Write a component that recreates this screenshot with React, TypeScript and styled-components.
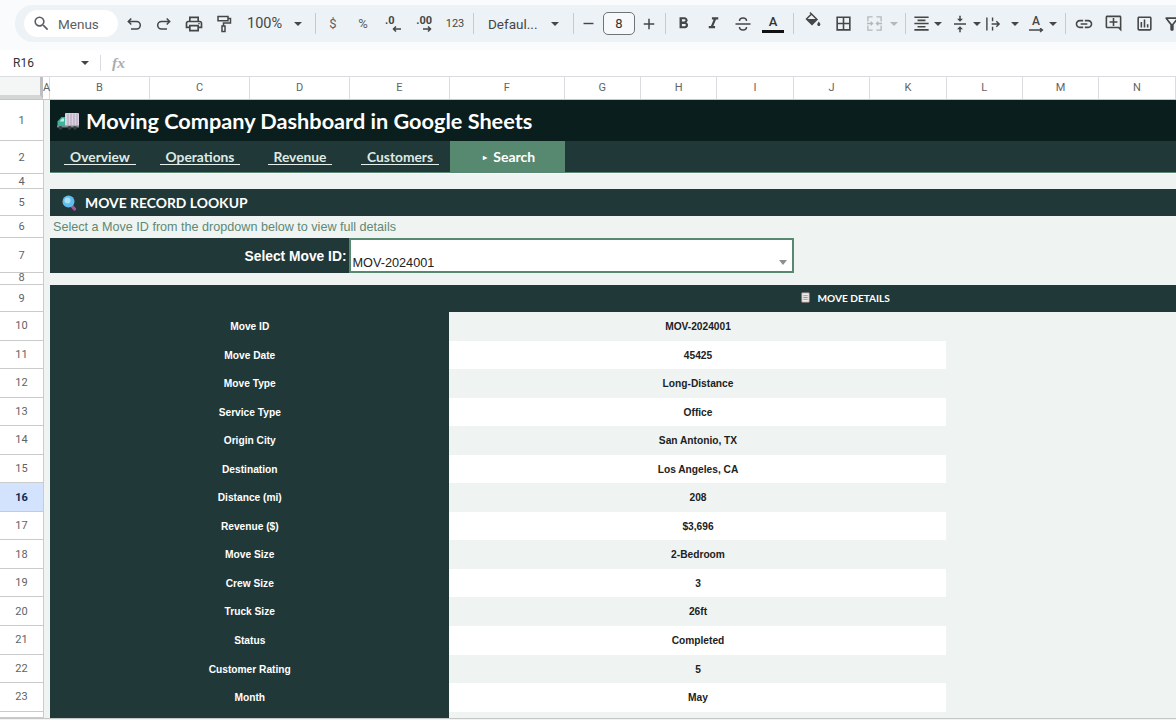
import React from 'react';
import styled, { createGlobalStyle } from 'styled-components';
import {
  MdOutlinePrint,
  MdSearch,
  MdAdd,
  MdRemove,
  MdFormatBold,
  MdFormatItalic,
  MdOutlineBorderAll,
  MdFormatAlignCenter,
  MdVerticalAlignCenter,
  MdLink,
  MdOutlineAddComment,
  MdOutlineInsertChart,
  MdOutlineFilterAlt,
} from 'react-icons/md';

const columns = [
  { name: 'A', width: 7 },
  { name: 'B', width: 100 },
  { name: 'C', width: 100 },
  { name: 'D', width: 100 },
  { name: 'E', width: 100 },
  { name: 'F', width: 114.5 },
  { name: 'G', width: 76.5 },
  { name: 'H', width: 76.4 },
  { name: 'I', width: 76.4 },
  { name: 'J', width: 76.4 },
  { name: 'K', width: 76.4 },
  { name: 'L', width: 76.4 },
  { name: 'M', width: 76.4 },
  { name: 'N', width: 76.4 },
];

const details = [
  ['Move ID', 'MOV-2024001'],
  ['Move Date', '45425'],
  ['Move Type', 'Long-Distance'],
  ['Service Type', 'Office'],
  ['Origin City', 'San Antonio, TX'],
  ['Destination', 'Los Angeles, CA'],
  ['Distance (mi)', '208'],
  ['Revenue ($)', '$3,696'],
  ['Move Size', '2-Bedroom'],
  ['Crew Size', '3'],
  ['Truck Size', '26ft'],
  ['Status', 'Completed'],
  ['Customer Rating', '5'],
  ['Month', 'May'],
];

const tabs = ['Overview', 'Operations', 'Revenue', 'Customers'];

const App: React.FC = () => {
  return (
    <Page>
      <GlobalStyle />
      <TopBand>
        <Toolbar>
          <SearchPill>
            <MdSearch size={19} />
            <span>Menus</span>
          </SearchPill>
          <Tool $w={30} $ml={1}>
            <LineIcon viewBox="0 0 18 18">
              <path d="M3.500 6.500h8a3.800 3.800 0 0 1 0 7.600H6M6.300 3.500l-3 3 3 3" />
            </LineIcon>
          </Tool>
          <Tool $w={30}>
            <LineIcon viewBox="0 0 18 18">
              <path d="M14.500 6.500h-8a3.800 3.800 0 0 0 0 7.600H12M11.700 3.500l3 3-3 3" />
            </LineIcon>
          </Tool>
          <Tool $w={30}><MdOutlinePrint size={20} /></Tool>
          <Tool $w={30}>
            <LineIcon viewBox="0 0 18 18">
              <path d="M3 1.500h10v4.200H3zM13 3.500h2.500v4.500H8.500v3M7 11h3v5.500H7z" />
            </LineIcon>
          </Tool>
          <TextSelect $w={74} $pad={8}>
            <ZoomText>100%</ZoomText>
            <Caret />
          </TextSelect>
          <Sep />
          <Tool $w={30}><Glyph>$</Glyph></Tool>
          <Tool $w={30}><Glyph>%</Glyph></Tool>
          <Tool $w={30}>
            <Decimal>
              <b>.0</b>
              <ArrowLine viewBox="0 0 9 6">
                <path d="M9 3H1.500M4 .5 1.500 3 4 5.500" fill="none" stroke="#444746" strokeWidth="1.500" />
              </ArrowLine>
            </Decimal>
          </Tool>
          <Tool $w={32}>
            <Decimal $wide>
              <b>.00</b>
              <ArrowLine viewBox="0 0 9 6">
                <path d="M0 3h7.500M5 .5 7.500 3 5 5.500" fill="none" stroke="#444746" strokeWidth="1.500" />
              </ArrowLine>
            </Decimal>
          </Tool>
          <Tool $w={30}><SmallGlyph>123</SmallGlyph></Tool>
          <Sep $ml={3} />
          <TextSelect $w={94} $pad={12}>
            <FontText>Defaul...</FontText>
            <Caret />
          </TextSelect>
          <Sep $ml={3} />
          <Tool $w={24}><MdRemove size={17} /></Tool>
          <Tool $w={38}><SizeBox>8</SizeBox></Tool>
          <Tool $w={22}><MdAdd size={18} /></Tool>
          <Sep $ml={5} />
          <Tool $w={30}><MdFormatBold size={19} /></Tool>
          <Tool $w={30}><MdFormatItalic size={19} /></Tool>
          <Tool $w={29}>
            <LineIcon viewBox="0 0 18 18">
              <path d="M5.500 6c0-2 1.500-3 3.500-3s3.500 1 3.500 3M1.500 9h15M5.500 12c0 2 1.500 3 3.500 3s3.500-1 3.500-3" />
            </LineIcon>
          </Tool>
          <Tool $w={32}>
            <TextColor>
              <span>A</span>
              <ColorBar />
            </TextColor>
          </Tool>
          <Sep $ml={4} />
          <Tool $w={30} $ml={1}>
            <FillIcon viewBox="0 0 18 18">
              <path d="M7 1.500l2 2M8.500 3l5.500 5.500-5 5-5.500-5.500z" fill="none" stroke="#444746" strokeWidth="1.500" />
              <path d="M3.500 8h10.500l-5 5.500z" fill="#444746" />
              <path d="M15.800 10.500c1 1.400 1.500 2.100 1.500 3a1.500 1.500 0 0 1-3 0c0-.9.500-1.600 1.500-3z" fill="#444746" />
            </FillIcon>
          </Tool>
          <Tool $w={33}><MdOutlineBorderAll size={19} /></Tool>
          <Tool $w={28}>
            <svg width="17" height="17" viewBox="0 0 18 18" fill="none" stroke="#b4b8bb" strokeWidth="1.400">
              <path d="M2 7V2h5M11 2h5v5M2 11v5h5M11 16h5v-5M1 9h6M5 7l2 2-2 2M17 9h-6M13 7l-2 2 2 2" />
            </svg>
          </Tool>
          <Tool $w={12}><Caret $faded /></Tool>
          <Sep $ml={5} />
          <Tool $w={22} $ml={2}><MdFormatAlignCenter size={19} /></Tool>
          <Tool $w={12}><Caret /></Tool>
          <Tool $w={22} $ml={5}><MdVerticalAlignCenter size={18} /></Tool>
          <Tool $w={12}><Caret /></Tool>
          <Tool $w={20}>
            <svg width="17" height="16" viewBox="0 0 18 16" fill="none" stroke="#444746" strokeWidth="1.500">
              <path d="M2 1v14M8 1v4M8 11v4M7 8h8M12 5l3 3-3 3" />
            </svg>
          </Tool>
          <Tool $w={12} $ml={6}><Caret /></Tool>
          <Tool $w={20} $ml={5}>
            <RotateA>
              <span>A</span>
              <svg width="16" height="5" viewBox="0 0 16 5" fill="none" stroke="#444746" strokeWidth="1.300">
                <path d="M1 2h13M12 0l2.500 2L12 4" />
              </svg>
            </RotateA>
          </Tool>
          <Tool $w={12} $ml={1}><Caret /></Tool>
          <Sep $ml={6} />
          <Tool $w={26} $ml={3}><MdLink size={20} /></Tool>
          <Tool $w={32}><MdOutlineAddComment size={19} /></Tool>
          <Tool $w={30}><MdOutlineInsertChart size={19} /></Tool>
          <Tool $w={26}><MdOutlineFilterAlt size={20} /></Tool>
        </Toolbar>
      </TopBand>

      <FormulaBar>
        <NameBox>
          <span>R16</span>
          <Caret />
        </NameBox>
        <FormulaSep />
        <FxMark>fx</FxMark>
      </FormulaBar>

      <ColumnStrip>
        <Corner />
        {columns.map((col) => (
          <ColumnHead key={col.name} $w={col.width}>{col.name}</ColumnHead>
        ))}
      </ColumnStrip>

      <SheetRow $h={41}>
        <RowHead>1</RowHead>
        <Gutter />
        <TitleCell>
          <TruckIcon />
          <span>Moving Company Dashboard in Google Sheets</span>
        </TitleCell>
      </SheetRow>

      <SheetRow $h={33}>
        <RowHead>2</RowHead>
        <Gutter />
        <NavCell>
          {tabs.map((tab) => (
            <NavTab key={tab}><NavLabel>{tab}</NavLabel></NavTab>
          ))}
          <ActiveTab><small>▸</small>Search</ActiveTab>
        </NavCell>
      </SheetRow>

      <SheetRow $h={15}>
        <RowHead>4</RowHead>
        <Gutter />
        <BlankCell />
      </SheetRow>

      <SheetRow $h={27}>
        <RowHead>5</RowHead>
        <Gutter />
        <SectionCell>
          <LensIcon />
          <span>MOVE RECORD LOOKUP</span>
        </SectionCell>
      </SheetRow>

      <SheetRow $h={22}>
        <RowHead>6</RowHead>
        <Gutter />
        <HintCell>Select a Move ID from the dropdown below to view full details</HintCell>
      </SheetRow>

      <SheetRow $h={35}>
        <RowHead>7</RowHead>
        <Gutter />
        <SelectLabel>Select Move ID:</SelectLabel>
        <SelectBox>
          <span>MOV-2024001</span>
          <SelectArrow />
        </SelectBox>
        <BlankCell />
      </SheetRow>

      <SheetRow $h={12}>
        <RowHead $low>8</RowHead>
        <Gutter />
        <BlankCell />
      </SheetRow>

      <SheetRow $h={27}>
        <RowHead>9</RowHead>
        <Gutter />
        <DetailsBar>
          <ClipboardIcon />
          <span>MOVE DETAILS</span>
        </DetailsBar>
      </SheetRow>

      {details.map(([label, value], i) => (
        <SheetRow key={label} $h={28.55}>
          <RowHead $active={i + 10 === 16}>{i + 10}</RowHead>
          <Gutter />
          <LabelCell>{label}</LabelCell>
          <ValueCell $white={i % 2 === 1}>{value}</ValueCell>
          <BlankCell />
        </SheetRow>
      ))}

      <SheetRow $h={6.3}>
        <RowHead />
        <Gutter />
        <LabelCell />
        <BlankCell />
      </SheetRow>
      <BottomEdge />
    </Page>
  );
};

const TruckIcon = () => (
  <TruckSvg viewBox="0 0 22 18">
    <rect x="8" y="1" width="14" height="13.500" rx="1" fill="#dcd3e2" />
    <path d="M11 1.500v12M14 1.500v12M17 1.500v12M20 1.500v12" stroke="#a99bb4" strokeWidth=".9" />
    <path d="M8 5H4.500L.5 9.500V14.500H8z" fill="#3fb39b" />
    <path d="M5 6.500h2v3H2.800z" fill="#bfeee2" />
    <rect x="0" y="13.500" width="22" height="2" fill="#7d8a8c" />
    <circle cx="3.500" cy="15.800" r="1.900" fill="#3a3f45" />
    <circle cx="12.500" cy="15.800" r="1.900" fill="#3a3f45" />
    <circle cx="18" cy="15.800" r="1.900" fill="#3a3f45" />
  </TruckSvg>
);

const LensIcon = () => (
  <LensSvg viewBox="0 0 15 16">
    <path d="M9 10l3.500 4" stroke="#a9539a" strokeWidth="3.200" strokeLinecap="round" />
    <circle cx="6.500" cy="6.500" r="6" fill="#5fbdec" />
    <circle cx="5.500" cy="5.500" r="3" fill="#a8e0f8" />
  </LensSvg>
);

const ClipboardIcon = () => (
  <ClipSvg viewBox="0 0 10 12">
    <rect x="0.500" y="0.500" width="9" height="11" rx="1" fill="#d3aaa5" />
    <rect x="1.500" y="1.500" width="7" height="9" fill="#eef0f0" />
    <path d="M2.500 4h5M2.500 6h5M2.500 8h5" stroke="#7a8688" strokeWidth=".9" />
  </ClipSvg>
);

const GlobalStyle = createGlobalStyle`
  html, body {
    margin: 0;
    padding: 0;
    background: #ffffff;
    overflow: hidden;
  }
  body {
    font-family: "Liberation Sans", Arial, sans-serif;
  }
`;

const Page = styled.div`
  width: 1176px;
  height: 720px;
  overflow: hidden;
  background: #ffffff;
`;

const TopBand = styled.div`
  height: 50px;
  box-sizing: border-box;
  padding: 5px 0 0 15px;
  background: #f9fbfd;
`;

const Toolbar = styled.div`
  display: flex;
  align-items: center;
  height: 37px;
  width: 1175px;
  padding-left: 9px;
  box-sizing: border-box;
  background: #edf2f7;
  border-radius: 18px 0 0 18px;
  color: #444746;
`;

const SearchPill = styled.div`
  flex: none;
  display: flex;
  align-items: center;
  gap: 7px;
  width: 94px;
  height: 27px;
  box-sizing: border-box;
  padding-left: 8px;
  background: #ffffff;
  border-radius: 14px;
  font: 400 13.500px Roboto, sans-serif;
  color: #5b5f62;
`;

const Tool = styled.div<{ $w: number; $ml?: number }>`
  flex: none;
  display: flex;
  align-items: center;
  justify-content: center;
  width: ${(p) => p.$w}px;
  margin-left: ${(p) => p.$ml || 0}px;
  height: 30px;
  color: #444746;
`;

const LineIcon = styled.svg`
  width: 18px;
  height: 18px;
  fill: none;
  stroke: #444746;
  stroke-width: 1.500;
`;

const FillIcon = styled.svg`
  width: 18px;
  height: 18px;
  margin-bottom: 7px;
`;

const TextSelect = styled.div<{ $w: number; $pad: number }>`
  flex: none;
  display: flex;
  align-items: center;
  justify-content: space-between;
  box-sizing: border-box;
  width: ${(p) => p.$w}px;
  padding: 0 11px 0 ${(p) => p.$pad}px;
`;

const ZoomText = styled.span`
  font: 400 14.500px Roboto, sans-serif;
  color: #444746;
`;

const FontText = styled.span`
  font: 400 13.500px Roboto, sans-serif;
  color: #444746;
`;

const Caret = styled.i<{ $faded?: boolean }>`
  flex: none;
  display: block;
  width: 0;
  height: 0;
  border-left: 4px solid transparent;
  border-right: 4px solid transparent;
  border-top: 4px solid ${(p) => (p.$faded ? '#b4b8bb' : '#444746')};
`;

const Sep = styled.div<{ $ml?: number }>`
  flex: none;
  width: 1px;
  height: 21px;
  margin-left: ${(p) => (p.$ml === undefined ? 2 : p.$ml)}px;
  margin-right: 2px;
  background: #c7cbce;
`;

const Glyph = styled.span`
  font: 400 13px Roboto, sans-serif;
  color: #5b5f62;
`;

const SmallGlyph = styled.span`
  font: 400 11px Roboto, sans-serif;
  color: #444746;
`;

const Decimal = styled.div<{ $wide?: boolean }>`
  display: flex;
  flex-direction: column;
  align-items: ${(p) => (p.$wide ? 'flex-end' : 'flex-start')};
  width: 16px;
  font: 700 11px/9px Roboto, sans-serif;
  color: #444746;
  b {
    font-weight: 700;
  }
  svg {
    align-self: flex-end;
  }
`;

const ArrowLine = styled.svg`
  width: 9px;
  height: 6px;
  margin-top: 1px;
`;

const SizeBox = styled.div`
  width: 32px;
  height: 23px;
  box-sizing: border-box;
  border: 1px solid #6f7478;
  border-radius: 5px;
  background: #f6f8fb;
  text-align: center;
  font: 400 13px/21px Roboto, sans-serif;
  color: #333;
`;

const TextColor = styled.div`
  display: flex;
  flex-direction: column;
  align-items: center;
  font: 500 13px/14px Roboto, sans-serif;
  color: #333;
`;

const ColorBar = styled.div`
  width: 22px;
  height: 3px;
  margin-top: 1px;
  background: #111;
`;

const RotateA = styled.div`
  display: flex;
  flex-direction: column;
  align-items: center;
  font: 500 12px/12px Roboto, sans-serif;
  color: #444746;
  svg {
    margin-top: 1px;
  }
`;

const FormulaBar = styled.div`
  display: flex;
  align-items: center;
  height: 27px;
  box-sizing: border-box;
  border-bottom: 1px solid #dadce0;
  background: #ffffff;
`;

const NameBox = styled.div`
  flex: none;
  display: flex;
  align-items: center;
  justify-content: space-between;
  box-sizing: border-box;
  width: 100px;
  padding: 0 11px 0 13px;
  font: 400 12px Roboto, sans-serif;
  color: #333;
`;

const FormulaSep = styled.div`
  flex: none;
  width: 1px;
  height: 16px;
  background: #dadce0;
`;

const FxMark = styled.span`
  margin-left: 11px;
  font: italic 700 15.500px "Liberation Serif", serif;
  color: #a9adb0;
`;

const ColumnStrip = styled.div`
  display: flex;
  height: 23px;
  box-sizing: border-box;
  border-bottom: 1px solid #c4c7c5;
  background: #ffffff;
`;

const Corner = styled.div`
  flex: none;
  width: 43px;
  box-sizing: border-box;
  background: #f4f5f5;
  border-right: 3px solid #bdbfc0;
  border-bottom: 4px solid #d4d6d6;
`;

const ColumnHead = styled.div<{ $w: number }>`
  flex: none;
  width: ${(p) => p.$w}px;
  box-sizing: border-box;
  border-right: 1px solid #dadce0;
  text-align: center;
  font: 400 11px/22px Roboto, sans-serif;
  color: #5f6368;
`;

const SheetRow = styled.div<{ $h: number }>`
  display: flex;
  height: ${(p) => p.$h}px;
`;

const RowHead = styled.div<{ $active?: boolean; $low?: boolean }>`
  flex: none;
  display: flex;
  align-items: ${(p) => (p.$low ? 'flex-end' : 'center')};
  justify-content: center;
  width: 43px;
  box-sizing: border-box;
  border-bottom: 1px solid #c9cccb;
  line-height: 11px;
  background: ${(p) => (p.$active ? '#d3e3fd' : '#ffffff')};
  font: ${(p) => (p.$active ? 700 : 400)} 11px Roboto, sans-serif;
  color: ${(p) => (p.$active ? '#0b2a55' : '#5f6368')};
`;

const Gutter = styled.div`
  flex: none;
  width: 6.500px;
  box-sizing: border-box;
  border-left: 1px solid #c9cccb;
  background: #eff4f2;
`;

const BlankCell = styled.div`
  flex: 1;
  background: #eff4f2;
`;

const TitleCell = styled.div`
  flex: 1;
  display: flex;
  align-items: center;
  gap: 7.500px;
  padding-left: 7px;
  background: #0a1e1d;
  font: 700 21.700px Lato, sans-serif;
  color: #ffffff;
`;

const TruckSvg = styled.svg`
  flex: none;
  width: 22px;
  height: 18px;
`;

const NavCell = styled.div`
  flex: 1;
  display: flex;
  align-items: stretch;
  height: 32px;
  padding-left: 0.500px;
  border-bottom: 1.500px solid #56896f;
  box-sizing: border-box;
  background: #213838;
`;

const NavTab = styled.div`
  flex: none;
  display: flex;
  align-items: center;
  justify-content: center;
  width: 100px;
`;

const NavLabel = styled.span`
  padding: 0 6px;
  border-bottom: 1px solid #e6efe9;
  font: 700 13.800px/15px Lato, sans-serif;
  color: #dfeae4;
`;

const ActiveTab = styled.div`
  flex: none;
  display: flex;
  align-items: center;
  justify-content: center;
  gap: 6px;
  width: 114.500px;
  box-sizing: border-box;
  padding-left: 4px;
  background: #56896f;
  font: 700 14px Lato, sans-serif;
  color: #ffffff;
  small {
    font-size: 8px;
  }
`;

const SectionCell = styled.div`
  flex: 1;
  display: flex;
  align-items: center;
  gap: 8px;
  padding-left: 12.500px;
  background: #213838;
  font: 700 13.900px Lato, sans-serif;
  color: #ffffff;
`;

const LensSvg = styled.svg`
  flex: none;
  width: 15px;
  height: 16px;
`;

const HintCell = styled.div`
  flex: 1;
  padding-left: 3.500px;
  background: #eff4f2;
  font: 400 12.600px/23px "Liberation Sans", Arial, sans-serif;
  color: #5f8875;
`;

const SelectLabel = styled.div`
  flex: none;
  width: 299.500px;
  box-sizing: border-box;
  padding-right: 2.500px;
  background: #213838;
  text-align: right;
  font: 700 13.800px/37px "Liberation Sans", Arial, sans-serif;
  color: #ffffff;
`;

const SelectBox = styled.div`
  flex: none;
  display: flex;
  align-items: flex-end;
  justify-content: space-between;
  width: 444.500px;
  box-sizing: border-box;
  padding: 0 5px 1px 1.500px;
  background: #ffffff;
  border: 2px solid #56896f;
  font: 400 12.700px/14px "Liberation Sans", Arial, sans-serif;
  color: #222;
`;

const SelectArrow = styled.i`
  display: block;
  width: 0;
  height: 0;
  margin-bottom: 5px;
  border-left: 4.500px solid transparent;
  border-right: 4.500px solid transparent;
  border-top: 5px solid #8b8f90;
`;

const DetailsBar = styled.div`
  flex: 1;
  display: flex;
  align-items: center;
  gap: 7.500px;
  padding: 0 0 2px 751.500px;
  background: #213838;
  font: 700 10.100px Lato, sans-serif;
  color: #ffffff;
`;

const ClipSvg = styled.svg`
  flex: none;
  width: 9px;
  height: 11px;
`;

const LabelCell = styled.div`
  flex: none;
  width: 399.500px;
  box-sizing: border-box;
  padding-left: 1px;
  background: #213838;
  text-align: center;
  font: 700 10.200px/29px "Liberation Sans", Arial, sans-serif;
  color: #ffffff;
`;

const ValueCell = styled.div<{ $white: boolean }>`
  flex: none;
  width: 497px;
  box-sizing: border-box;
  padding-left: 1px;
  background: ${(p) => (p.$white ? '#ffffff' : '#eff4f2')};
  text-align: center;
  font: 700 10.200px/29px "Liberation Sans", Arial, sans-serif;
  color: #1c2222;
`;

const BottomEdge = styled.div`
  height: 2px;
  border-top: 1px solid #c4c7c5;
  background: #f1f3f4;
`;

export default App;
